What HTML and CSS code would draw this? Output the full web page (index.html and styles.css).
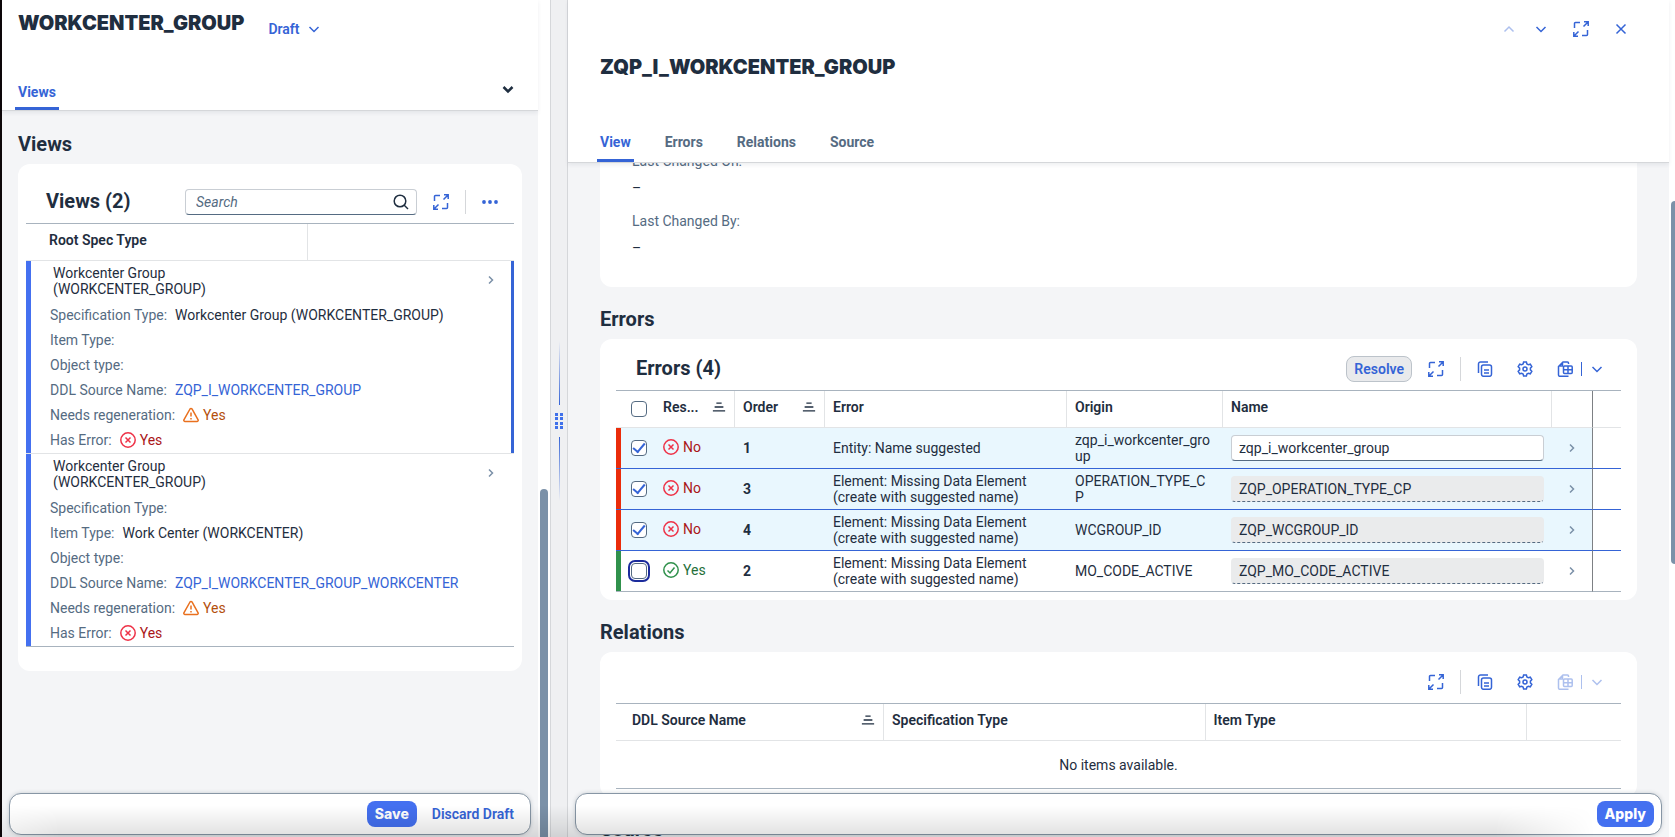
FILE: index.html
```html
<!DOCTYPE html>
<html lang="en">
<head>
    <meta charset="UTF-8">
    <meta name="viewport" content="width=device-width, initial-scale=1.0">
    <title>WORKCENTER_GROUP</title>
    <link rel="stylesheet" href="styles.css">
</head>
<body>
    <svg class="sprite" aria-hidden="true">
        <symbol id="i-down" viewBox="0 0 16 16"><path d="M3.500 6 8 10.500 12.500 6"/></symbol>
        <symbol id="i-up" viewBox="0 0 16 16"><path d="M3.500 10.500 8 6l4.500 4.500"/></symbol>
        <symbol id="i-right" viewBox="0 0 16 16"><path d="M6 4.500 9.500 8 6 11.500"/></symbol>
        <symbol id="i-close" viewBox="0 0 16 16"><path d="M3.500 3.500l9 9M12.500 3.500l-9 9"/></symbol>
        <symbol id="i-full" viewBox="0 0 16 16"><path d="M1.500 7V2.500a1 1 0 0 1 1-1H7M9 14.500h4.500a1 1 0 0 0 1-1V9M10.500 5.500 15 1M11 .8h4.200V5M5.500 10.500 1 15M.8 11v4.200H5"/></symbol>
        <symbol id="i-search" viewBox="0 0 16 16"><circle cx="7" cy="7" r="5.800"/><path d="M11 11l4 4"/></symbol>
        <symbol id="i-copy" viewBox="0 0 16 16"><path d="M1.500 12V3a2 2 0 0 1 2-2H11"/><rect x="4.500" y="4" width="10" height="11.300" rx="2"/><path d="M7 9h5M7 12h5"/></symbol>
        <symbol id="i-gear" viewBox="0 0 16 16"><path d="M6.600 1h2.800l.5 1.900 1.500.9 1.900-.6 1.500 2.500-1.400 1.400v1.800l1.400 1.400-1.500 2.500-1.900-.6-1.500.9L9.400 15H6.600l-.5-1.900-1.500-.9-1.900.6-1.500-2.500 1.400-1.400V7.100L1.200 5.700l1.500-2.500 1.900.6 1.500-.9z"/><circle cx="8" cy="8" r="2"/></symbol>
        <symbol id="i-export" viewBox="0 0 16 16"><path d="M11.500 3V2a1 1 0 0 0-1-1H6L1.500 5.500V14a1.300 1.300 0 0 0 1.300 1.300H11.500M5.500 1.500V5h-3"/><rect x="6.500" y="5" width="8.700" height="7.500" rx="1" fill="#fff"/><path d="M6.500 8.700h9M11 5v7.500"/></symbol>
        <symbol id="i-sort" viewBox="0 0 16 16"><path d="M5 3.500h6M3 8h10M1 12.500h14"/></symbol>
        <symbol id="i-more" viewBox="0 0 16 16"><circle cx="2" cy="8" r="1.900"/><circle cx="8" cy="8" r="1.900"/><circle cx="14" cy="8" r="1.900"/></symbol>
        <symbol id="i-error" viewBox="0 0 16 16"><circle cx="8" cy="8" r="7.200"/><path d="M5.500 5.500l5 5M10.500 5.500l-5 5"/></symbol>
        <symbol id="i-ok" viewBox="0 0 16 16"><circle cx="8" cy="8" r="7.200"/><path d="M4.500 8.500 7 11l4.500-5.500"/></symbol>
        <symbol id="i-warn" viewBox="0 0 16 16"><path d="M7 2 .9 12.800A1.200 1.200 0 0 0 2 14.500h12a1.200 1.200 0 0 0 1.100-1.700L9 2a1.200 1.200 0 0 0-2 0zM8 5.500v4M8 11v1.500"/></symbol>
    </svg>

    <div class="layout">
        <section class="pane pane-list">
            <div class="page">
                <header class="page-header">
                    <div class="title-row">
                        <h1>WORKCENTER_GROUP</h1>
                        <button class="draft-btn">Draft <svg class="icon"><use href="#i-down"/></svg></button>
                    </div>
                    <nav class="tabs">
                        <a href="#views" class="tab active">Views</a>
                        <button class="tabs-more" aria-label="More sections"><svg class="icon heavy"><use href="#i-down"/></svg></button>
                    </nav>
                </header>

                <main class="content">
                    <h2 id="views">Views</h2>
                    <div class="card">
                        <div class="toolbar">
                            <h3>Views (2)</h3>
                            <div class="search">
                                <input type="text" placeholder="Search" aria-label="Search">
                                <svg class="icon"><use href="#i-search"/></svg>
                            </div>
                            <button class="icon-btn" aria-label="Full screen"><svg class="icon"><use href="#i-full"/></svg></button>
                            <span class="separator"></span>
                            <button class="icon-btn" aria-label="More"><svg class="icon solid"><use href="#i-more"/></svg></button>
                        </div>
                        <table class="views-table">
                            <colgroup><col class="col-root"><col></colgroup>
                            <thead>
                                <tr><th>Root Spec Type</th><th></th></tr>
                            </thead>
                            <tbody class="selected">
                                <tr class="main-row">
                                    <td>Workcenter Group<br>(WORKCENTER_GROUP)</td>
                                    <td class="nav-cell"><svg class="icon"><use href="#i-right"/></svg></td>
                                </tr>
                                <tr class="popin-row">
                                    <td colspan="2">
                                        <div class="popin"><span>Specification Type:</span> Workcenter Group (WORKCENTER_GROUP)</div>
                                        <div class="popin"><span>Item Type:</span></div>
                                        <div class="popin"><span>Object type:</span></div>
                                        <div class="popin"><span>DDL Source Name:</span> <a href="#">ZQP_I_WORKCENTER_GROUP</a></div>
                                        <div class="popin"><span>Needs regeneration:</span> <b class="status warn"><svg class="icon"><use href="#i-warn"/></svg>Yes</b></div>
                                        <div class="popin"><span>Has Error:</span> <b class="status error"><svg class="icon"><use href="#i-error"/></svg>Yes</b></div>
                                    </td>
                                </tr>
                            </tbody>
                            <tbody>
                                <tr class="main-row">
                                    <td>Workcenter Group<br>(WORKCENTER_GROUP)</td>
                                    <td class="nav-cell"><svg class="icon"><use href="#i-right"/></svg></td>
                                </tr>
                                <tr class="popin-row">
                                    <td colspan="2">
                                        <div class="popin"><span>Specification Type:</span></div>
                                        <div class="popin"><span>Item Type:</span> Work Center (WORKCENTER)</div>
                                        <div class="popin"><span>Object type:</span></div>
                                        <div class="popin"><span>DDL Source Name:</span> <a href="#">ZQP_I_WORKCENTER_GROUP_WORKCENTER</a></div>
                                        <div class="popin"><span>Needs regeneration:</span> <b class="status warn"><svg class="icon"><use href="#i-warn"/></svg>Yes</b></div>
                                        <div class="popin"><span>Has Error:</span> <b class="status error"><svg class="icon"><use href="#i-error"/></svg>Yes</b></div>
                                    </td>
                                </tr>
                            </tbody>
                        </table>
                    </div>
                </main>

                <footer class="footer">
                    <button class="btn primary">Save</button>
                    <button class="btn">Discard Draft</button>
                </footer>
            </div>
            <div class="scroll-track"><div class="scroll-thumb"></div></div>
        </section>

        <div class="splitter">
            <span class="splitter-line up"></span>
            <svg class="grip" viewBox="0 0 8 16"><path d="M0 0h3v3H0zM5 0h3v3H5zM0 4h3v3H0zM5 4h3v3H5zM0 9h3v3H0zM5 9h3v3H5zM0 13h3v3H0zM5 13h3v3H5z"/></svg>
            <span class="splitter-line down"></span>
        </div>

        <section class="pane pane-detail">
            <div class="page">
                <header class="page-header">
                    <div class="actions">
                        <button class="icon-btn" aria-label="Previous" disabled><svg class="icon"><use href="#i-up"/></svg></button>
                        <button class="icon-btn" aria-label="Next"><svg class="icon"><use href="#i-down"/></svg></button>
                        <button class="icon-btn spaced" aria-label="Full screen"><svg class="icon"><use href="#i-full"/></svg></button>
                        <button class="icon-btn spaced" aria-label="Close"><svg class="icon"><use href="#i-close"/></svg></button>
                    </div>
                    <h1>ZQP_I_WORKCENTER_GROUP</h1>
                    <nav class="tabs">
                        <a href="#view" class="tab active">View</a>
                        <a href="#errors" class="tab">Errors</a>
                        <a href="#relations" class="tab">Relations</a>
                        <a href="#source" class="tab">Source</a>
                    </nav>
                </header>

                <main class="content scrolled">
                    <dl class="card form" id="view">
                        <dt>Last Changed On:</dt>
                        <dd>–</dd>
                        <dt>Last Changed By:</dt>
                        <dd>–</dd>
                    </dl>

                    <h2 id="errors">Errors</h2>
                    <div class="card">
                        <div class="toolbar">
                            <h3>Errors (4)</h3>
                            <button class="btn resolve">Resolve</button>
                            <button class="icon-btn" aria-label="Full screen"><svg class="icon"><use href="#i-full"/></svg></button>
                            <span class="separator"></span>
                            <button class="icon-btn" aria-label="Copy"><svg class="icon"><use href="#i-copy"/></svg></button>
                            <button class="icon-btn spaced" aria-label="Settings"><svg class="icon"><use href="#i-gear"/></svg></button>
                            <div class="split-btn">
                                <button aria-label="Export"><svg class="icon"><use href="#i-export"/></svg></button>
                                <button class="split-arrow" aria-label="Export options"><svg class="icon"><use href="#i-down"/></svg></button>
                            </div>
                        </div>
                        <table class="errors-table">
                            <colgroup>
                                <col class="col-select"><col class="col-resolved"><col class="col-order"><col class="col-error">
                                <col class="col-origin"><col><col class="col-nav"><col class="col-rest">
                            </colgroup>
                            <thead>
                                <tr>
                                    <th class="select"><input type="checkbox" aria-label="Select all"></th>
                                    <th><div class="sorted">Res... <svg class="icon"><use href="#i-sort"/></svg></div></th>
                                    <th><div class="sorted">Order <svg class="icon"><use href="#i-sort"/></svg></div></th>
                                    <th>Error</th>
                                    <th>Origin</th>
                                    <th>Name</th>
                                    <th class="nav-cell"></th>
                                    <th></th>
                                </tr>
                            </thead>
                            <tbody>
                                <tr class="open checked">
                                    <td class="select"><input type="checkbox" aria-label="Select item 1" checked></td>
                                    <td><b class="status error"><svg class="icon"><use href="#i-error"/></svg>No</b></td>
                                    <td class="order">1</td>
                                    <td>Entity: Name suggested</td>
                                    <td class="origin">zqp_i_workcenter_group</td>
                                    <td><input type="text" aria-label="Name 1" value="zqp_i_workcenter_group"></td>
                                    <td class="nav-cell"><svg class="icon"><use href="#i-right"/></svg></td>
                                    <td></td>
                                </tr>
                                <tr class="open checked">
                                    <td class="select"><input type="checkbox" aria-label="Select item 3" checked></td>
                                    <td><b class="status error"><svg class="icon"><use href="#i-error"/></svg>No</b></td>
                                    <td class="order">3</td>
                                    <td>Element: Missing Data Element (create with suggested name)</td>
                                    <td class="origin">OPERATION_TYPE_CP</td>
                                    <td><input type="text" aria-label="Name 3" value="ZQP_OPERATION_TYPE_CP" readonly></td>
                                    <td class="nav-cell"><svg class="icon"><use href="#i-right"/></svg></td>
                                    <td></td>
                                </tr>
                                <tr class="open checked">
                                    <td class="select"><input type="checkbox" aria-label="Select item 4" checked></td>
                                    <td><b class="status error"><svg class="icon"><use href="#i-error"/></svg>No</b></td>
                                    <td class="order">4</td>
                                    <td>Element: Missing Data Element (create with suggested name)</td>
                                    <td class="origin">WCGROUP_ID</td>
                                    <td><input type="text" aria-label="Name 4" value="ZQP_WCGROUP_ID" readonly></td>
                                    <td class="nav-cell"><svg class="icon"><use href="#i-right"/></svg></td>
                                    <td></td>
                                </tr>
                                <tr class="done">
                                    <td class="select"><input type="checkbox" class="focused" aria-label="Select item 2"></td>
                                    <td><b class="status success"><svg class="icon"><use href="#i-ok"/></svg>Yes</b></td>
                                    <td class="order">2</td>
                                    <td>Element: Missing Data Element (create with suggested name)</td>
                                    <td class="origin">MO_CODE_ACTIVE</td>
                                    <td><input type="text" aria-label="Name 2" value="ZQP_MO_CODE_ACTIVE" readonly></td>
                                    <td class="nav-cell"><svg class="icon"><use href="#i-right"/></svg></td>
                                    <td></td>
                                </tr>
                            </tbody>
                        </table>
                    </div>

                    <h2 id="relations">Relations</h2>
                    <div class="card">
                        <div class="toolbar">
                            <button class="icon-btn first" aria-label="Full screen"><svg class="icon"><use href="#i-full"/></svg></button>
                            <span class="separator"></span>
                            <button class="icon-btn" aria-label="Copy"><svg class="icon"><use href="#i-copy"/></svg></button>
                            <button class="icon-btn spaced" aria-label="Settings"><svg class="icon"><use href="#i-gear"/></svg></button>
                            <div class="split-btn">
                                <button aria-label="Export" disabled><svg class="icon"><use href="#i-export"/></svg></button>
                                <button class="split-arrow" aria-label="Export options" disabled><svg class="icon"><use href="#i-down"/></svg></button>
                            </div>
                        </div>
                        <table class="relations-table">
                            <colgroup><col class="col-source"><col><col><col class="col-last"></colgroup>
                            <thead>
                                <tr>
                                    <th><div class="sorted">DDL Source Name <svg class="icon"><use href="#i-sort"/></svg></div></th>
                                    <th>Specification Type</th>
                                    <th>Item Type</th>
                                    <th></th>
                                </tr>
                            </thead>
                            <tbody>
                                <tr><td colspan="4" class="no-data">No items available.</td></tr>
                            </tbody>
                        </table>
                    </div>

                    <h2 id="source">Source</h2>
                </main>

                <footer class="footer">
                    <button class="btn primary">Apply</button>
                </footer>
            </div>
            <div class="scroll-track"><div class="scroll-thumb"></div></div>
        </section>
    </div>
    <div class="bottom-shade"></div>
</body>
</html>
```
FILE: styles.css
```css
* {
    box-sizing: border-box;
}

body {
    margin: 0;
    font-family: Roboto, "Liberation Sans", sans-serif;
    font-size: 14px;
    line-height: 16px;
    color: #1f2e40;
    background: #fff;
    overflow: hidden;
}

h1, h2, h3, dl, dd {
    margin: 0;
}

h1 {
    font-family: Inter, "Liberation Sans", sans-serif;
    font-size: 20px;
    font-weight: 900;
    line-height: 28px;
}

h2, h3 {
    font-size: 20px;
    font-weight: 700;
    line-height: 24px;
}

a {
    color: #3564d6;
    text-decoration: none;
}

button, input {
    font: inherit;
    color: inherit;
}

button {
    display: inline-flex;
    align-items: center;
    justify-content: center;
    height: 26px;
    padding: 0;
    border: none;
    background: none;
    color: #3564d6;
    cursor: pointer;
}

button:disabled {
    opacity: 0.4;
}

.sprite {
    position: absolute;
    width: 0;
    height: 0;
}

.icon {
    flex: none;
    width: 16px;
    height: 16px;
    fill: none;
    stroke: currentColor;
    stroke-width: 1.5;
}

.icon.solid {
    fill: currentColor;
    stroke: none;
}

.icon.heavy {
    stroke-width: 2.5;
}

/* Layout */
.layout {
    display: grid;
    grid-template-columns: 548px 18px 1fr;
    height: 100vh;
    border-left: 2px solid #0d0709;
}

.pane {
    display: flex;
    min-width: 0;
    height: 100vh;
}

.page {
    position: relative;
    flex: 1;
    min-width: 0;
    display: flex;
    flex-direction: column;
    background: #f4f5f7;
}

.page-header {
    position: relative;
    z-index: 1;
    background: #fff;
    border-bottom: 1px solid #d5d7da;
    box-shadow: 0 2px 4px rgba(34, 53, 72, 0.08);
}

.content {
    flex: 1;
    min-height: 0;
    overflow: hidden;
}

.scroll-track {
    flex: none;
    background: #fff;
}

.scroll-thumb {
    background: #7b91a8;
}

.pane-list .scroll-track {
    width: 12px;
    padding: 489px 2px 0;
}

.pane-list .scroll-thumb {
    width: 8px;
    height: 100%;
    border-radius: 4px 4px 0 0;
}

.pane-detail .scroll-track {
    width: 6px;
    padding: 201px 0 0 2px;
}

.pane-detail .scroll-thumb {
    height: 363px;
    border-radius: 4px 0 0 4px;
}

.splitter {
    display: flex;
    flex-direction: column;
    align-items: center;
    justify-content: center;
    gap: 8px;
    padding-top: 4px;
    background: #eff0f2;
    border-left: 1px solid #d5d7da;
    border-right: 1px solid #d5d7da;
}

.splitter-line {
    width: 1px;
    height: 64px;
}

.splitter-line.up {
    background: linear-gradient(to top, #3564d6, transparent);
}

.splitter-line.down {
    background: linear-gradient(to bottom, #3564d6, transparent);
}

.grip {
    width: 8px;
    height: 16px;
    fill: #3f70ea;
}

/* Headers */
.title-row {
    display: flex;
    align-items: flex-start;
    gap: 24px;
    height: 44px;
    padding: 9px 16px 0;
}

.draft-btn {
    gap: 6px;
    margin-top: 7px;
    font-weight: 600;
}

.tabs {
    display: flex;
    gap: 28px;
}

.tab {
    padding: 0 3px 5px;
    border-bottom: 3px solid transparent;
    line-height: 20px;
    font-weight: 700;
    color: #556b82;
}

.tab.active {
    color: #3564d6;
    border-bottom-color: #3564d6;
}

.pane-list .tabs {
    margin-top: 38px;
    padding: 0 22px 0 13px;
}

.tabs-more {
    height: 14px;
    margin-left: auto;
    color: #1f2e40;
}

.actions {
    display: flex;
    justify-content: flex-end;
    padding: 16px 32px 0 0;
}

.pane-detail h1 {
    margin-top: 11px;
    padding-left: 32px;
}

.pane-detail .tabs {
    margin-top: 51px;
    padding-left: 29px;
}

.pane-detail .tab {
    padding-bottom: 7px;
}

/* Sections */
.pane-list .content {
    padding: 1px 16px 0;
}

.pane-detail .content {
    padding: 0 32px;
}

.content h2 {
    padding: 20px 0 8px;
}

.card {
    padding: 9px 16px 8px;
    background: #fff;
    border-radius: 12px;
}

.pane-list .card {
    padding: 17px 8px 24px;
}

/* first section is partly scrolled under the header */
.scrolled {
    margin-top: -12px;
}

.card.form {
    padding: 0 32px 29px;
    border-radius: 0 0 12px 12px;
    line-height: 20px;
}

.form dt {
    margin-bottom: 7px;
    color: #556b82;
}

.form dd + dt {
    margin-top: 13px;
}

.toolbar {
    display: flex;
    align-items: center;
    height: 42px;
    padding: 0 16px 0 20px;
}

.toolbar h3 {
    margin-right: auto;
    padding-bottom: 2px;
}

.icon-btn {
    width: 32px;
}

.icon-btn.spaced {
    margin-left: 8px;
}

.icon-btn.first {
    margin-left: auto;
}

.separator {
    width: 1px;
    height: 24px;
    margin: 0 8px;
    background: #d5d7da;
}

.pane-list .toolbar {
    padding: 0 8px 0 20px;
}

.search {
    display: flex;
    align-items: center;
    width: 232px;
    height: 26px;
    margin-right: 8px;
    padding: 0 7px 0 10px;
    border: 1px solid #c9ced4;
    border-bottom-color: #556b82;
    border-radius: 4px;
}

.search .icon {
    color: #1f2e40;
}

.search input {
    flex: 1;
    min-width: 0;
    padding: 0;
    border: none;
    outline: none;
    background: none;
}

.search input::placeholder {
    color: #556b82;
    font-style: italic;
}

.btn {
    padding: 0 8px;
    border: 1px solid transparent;
    border-radius: 8px;
    font-weight: 600;
}

.btn.primary {
    padding: 0 7px;
    background: #4470f0;
    color: #fff;
    font-family: Inter, "Liberation Sans", sans-serif;
    font-weight: 800;
}

.btn.resolve {
    margin-right: 8px;
    padding: 0 7px;
    background: #e9eaec;
    border-color: #bcc3ca;
}

.split-btn {
    display: flex;
    align-items: center;
    margin-left: 16px;
}

.split-arrow {
    height: 14px;
    margin-left: 8px;
    padding-left: 7px;
    border-left: 1px solid #3564d6;
}

/* Tables */
table {
    width: 100%;
    table-layout: fixed;
    border-collapse: separate;
    border-spacing: 0;
    border-top: 1px solid #a8b3be;
}

th, td {
    padding: 0 8px;
    text-align: left;
    font-weight: 400;
    border-bottom: 1px solid #e2e4e6;
}

th {
    height: 37px;
    padding-bottom: 4px;
    font-weight: 600;
    border-right: 1px solid #e2e4e6;
}

th:last-child {
    border-right: none;
}

.sorted {
    display: flex;
    align-items: center;
    justify-content: space-between;
}

.sorted .icon {
    width: 14px;
    height: 14px;
}

tbody:last-child tr:last-child td {
    border-bottom-color: #a8b3be;
}

.nav-cell {
    color: #7b90a8;
}

.nav-cell .icon {
    display: block;
    margin: 0 auto;
}

.status {
    display: inline-flex;
    align-items: center;
    gap: 4px;
    font-weight: 400;
}

.status.error {
    color: #aa1618;
}

.status.error .icon {
    color: #ee3247;
}

.status.warn {
    color: #b44f0d;
}

.status.warn .icon {
    color: #e9701e;
}

.status.success {
    color: #256f3a;
}

.status.success .icon {
    color: #30914c;
}

/* Views table */
.col-root {
    width: 282px;
}

.views-table th {
    padding-left: 23px;
}

.views-table tbody td {
    border-bottom: none;
}

.main-row td {
    height: 38px;
    padding: 4px 0 2px 27px;
}

.main-row .nav-cell {
    padding: 0 15px 0 0;
}

.main-row .nav-cell .icon {
    margin: 0 0 0 auto;
}

.views-table .popin-row td {
    padding: 3px 0 1px 24px;
    border-bottom: 1px solid #e2e4e6;
}

.views-table tbody:last-child .popin-row td {
    border-bottom-color: #a8b3be;
}

.views-table tbody td:first-child {
    box-shadow: inset 5px 0 #4470f0;
}

.selected .main-row td:last-child {
    box-shadow: inset -3px 0 #3564d6;
}

.views-table .selected .popin-row td {
    box-shadow: inset 5px 0 #4470f0, inset -3px 0 #3564d6;
}

.popin {
    display: flex;
    align-items: center;
    gap: 8px;
    height: 25px;
}

.popin span {
    color: #556b82;
}

/* Errors table */
.col-select {
    width: 38px;
}

.col-resolved {
    width: 81px;
}

.col-order {
    width: 90px;
}

.col-error {
    width: 242px;
}

.col-origin {
    width: 156px;
}

.col-nav {
    width: 41px;
}

.col-rest {
    width: 28px;
}

.errors-table td {
    height: 41px;
}

.errors-table .select {
    padding: 0 0 0 15px;
    border-right: none;
}

.errors-table .nav-cell {
    border-right: 1px solid #7d8084;
}

.errors-table td:nth-child(2),
.errors-table th:nth-child(2) {
    padding-left: 9px;
}

.checked td {
    background: #e9f7fe;
    border-bottom-color: #3564d6;
}

.errors-table td:last-child {
    background: #fff;
}

.open .select {
    box-shadow: inset 5px 0 #ea2c0a;
}

.done .select {
    box-shadow: inset 5px 0 #30914c;
}

.order {
    font-weight: 700;
}

.errors-table .origin {
    padding-right: 10px;
    overflow-wrap: anywhere;
}

input[type="checkbox"] {
    appearance: none;
    display: grid;
    place-items: center;
    width: 16px;
    height: 16px;
    margin: 0;
    border: 1px solid #556b82;
    border-radius: 4px;
    background: #fff;
}

input[type="checkbox"]:checked::before {
    content: "";
    width: 10px;
    height: 5px;
    margin-top: -3px;
    border: solid #3564d6;
    border-width: 0 0 2px 2px;
    transform: rotate(-50deg);
}

input[type="checkbox"].focused {
    outline: 2px solid #1b2b9c;
    outline-offset: 1px;
}

.errors-table input[type="text"] {
    display: block;
    width: 100%;
    height: 26px;
    padding: 0 7px;
    border: 1px solid #c9ced4;
    border-bottom-color: #556b82;
    border-radius: 4px;
    outline: none;
    background: #fff;
}

.errors-table input[readonly] {
    border-color: transparent;
    border-bottom: 1px dashed #556b82;
    background: #eaebec;
}

/* Relations table */
.col-source {
    width: 268px;
}

.col-last {
    width: 94px;
}

.relations-table th:first-child {
    padding-left: 16px;
}

.relations-table .no-data {
    height: 48px;
    text-align: center;
}

/* Floating footers */
.footer {
    position: absolute;
    z-index: 2;
    left: 7px;
    right: 7px;
    bottom: 2px;
    display: flex;
    align-items: center;
    justify-content: flex-end;
    gap: 6px;
    height: 42px;
    padding: 0 7px;
    background: #fff;
    border: 1px solid #8796a5;
    border-radius: 12px;
    box-shadow: 0 0 4px rgba(34, 53, 72, 0.2);
}

.bottom-shade {
    position: fixed;
    z-index: 3;
    left: 0;
    right: 80px;
    bottom: 0;
    height: 32px;
    background: linear-gradient(transparent, rgba(0, 0, 0, 0.12));
    mask-image: linear-gradient(to right, rgba(0, 0, 0, 0.5), #000 60px, #000 calc(100% - 100px), transparent);
    pointer-events: none;
}
```
